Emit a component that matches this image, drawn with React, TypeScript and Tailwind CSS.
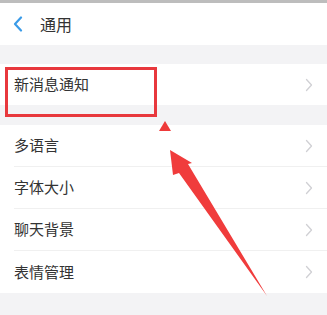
const font = { fontFamily: '"Noto Sans CJK SC", "Noto Sans", sans-serif' }

function Chevron() {
  return (
    <svg width="8" height="14" viewBox="0 0 8 14" fill="none">
      <path d="M1.5 1.5 L6.5 7 L1.5 12.5" stroke="#d0d0d4" strokeWidth="1.3" strokeLinecap="round" strokeLinejoin="round" />
    </svg>
  )
}

function Row({ label, divider }: { label: string; divider?: boolean }) {
  return (
    <div className="h-[42px] bg-white pl-[14px] flex">
      <div
        className={`flex-1 flex items-center justify-between pr-[14px] ${
          divider ? 'border-b border-[#f0f0f0]' : ''
        }`}
      >
        <span className="text-[15px] text-[#333]">{label}</span>
        <Chevron />
      </div>
    </div>
  )
}

export default function App() {
  return (
    <div className="relative w-[327px] h-[315px] overflow-hidden bg-[#f3f3f5]" style={font}>
      <div className="h-[3px] bg-[#bdbdbd]" />
      {/* Header */}
      <div className="h-[42px] bg-white flex items-center pl-[13px] gap-[17px]">
        <svg width="10" height="16" viewBox="0 0 10 16" fill="none">
          <path d="M8 1.5 L2 8 L8 14.5" stroke="#3a9be8" strokeWidth="2.2" strokeLinecap="round" strokeLinejoin="round" />
        </svg>
        <span className="text-[16px] text-[#333]">通用</span>
      </div>

      <div className="h-[19px]" />
      <div className="h-[41px] bg-white pl-[14px] flex items-center justify-between pr-[14px]">
        <span className="text-[15px] text-[#333]">新消息通知</span>
        <Chevron />
      </div>
      <div className="h-[20px]" />

      <Row label="多语言" divider />
      <Row label="字体大小" divider />
      <Row label="聊天背景" divider />
      <Row label="表情管理" />

      {/* Annotation overlay */}
      <div className="absolute left-[5px] top-[67px] w-[152px] h-[50px] border-[3px] border-[#e8383d]" />
      <svg className="absolute inset-0 pointer-events-none" width="327" height="315" viewBox="0 0 327 315">
        <polygon points="159,131 165,121 171,131" fill="#ee3a3a" />
        <polygon points="170,150 192,163 188,164 267,296 179,173 173,175" fill="#f03c3c" />
      </svg>
    </div>
  )
}
